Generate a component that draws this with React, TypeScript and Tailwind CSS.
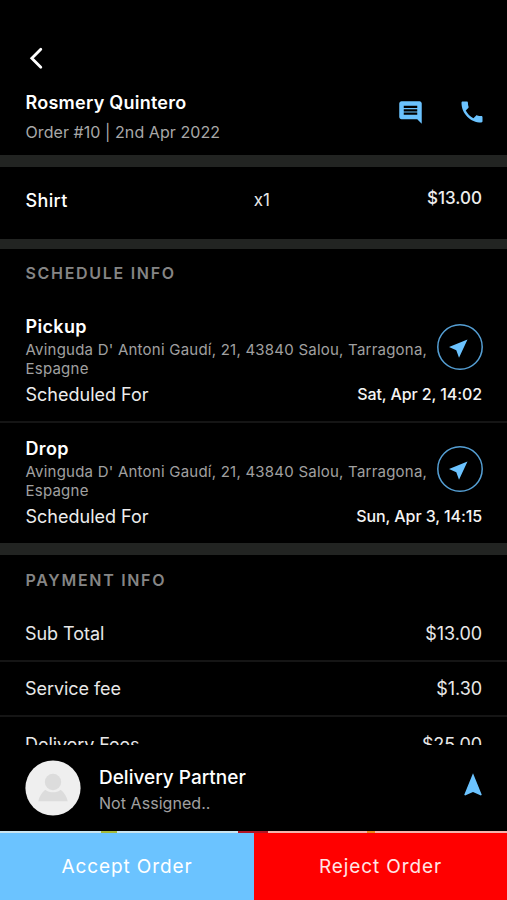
import { MdComment, MdPhone, MdNavigation } from 'react-icons/md'

type Stop = { title: string; address: string; time: string }

const stops: Stop[] = [
  {
    title: 'Pickup',
    address: "Avinguda D' Antoni Gaudí, 21, 43840 Salou, Tarragona, Espagne",
    time: 'Sat, Apr 2, 14:02',
  },
  {
    title: 'Drop',
    address: "Avinguda D' Antoni Gaudí, 21, 43840 Salou, Tarragona, Espagne",
    time: 'Sun, Apr 3, 14:15',
  },
]

const payments = [
  { label: 'Sub Total', amount: '$13.00' },
  { label: 'Service fee', amount: '$1.30' },
  { label: 'Delivery Fees', amount: '$25.00' },
]

function SectionTitle({ children }: { children: string }) {
  return (
    <h2 className="text-[16px] leading-5 font-semibold tracking-[1.7px] text-[#858585]">{children}</h2>
  )
}

function StopRow({ stop }: { stop: Stop }) {
  return (
    <div className="pr-6 pl-[25.5px]">
      <div className="flex h-[66px] items-start justify-between">
        <div>
          <h3 className="text-[18px] leading-6 font-semibold tracking-[0.35px]">{stop.title}</h3>
          <p className="mt-[2px] w-[408px] text-[15px] leading-[18.5px] tracking-[0.23px] text-[#a0a0a0]">
            {stop.address}
          </p>
        </div>
        <div className="mt-[9px] -ml-4 size-[46px] shrink-0">
          <svg className="size-[46px]" viewBox="0 0 46 46" fill="#6bc3ff">
            <circle cx="23" cy="23" r="22.2" fill="none" stroke="#559fd4" strokeWidth="1.5" />
            <path d="M30.5 15.4 12 23.1 19.3 26.3 22 33.8z" />
          </svg>
        </div>
      </div>
      <div className="flex h-[26px] items-center justify-between pr-px">
        <span className="text-[18px] text-[#ededed]">Scheduled For</span>
        <span className="text-[16px] font-medium tracking-[-0.1px] text-[#f4f4f4]">{stop.time}</span>
      </div>
    </div>
  )
}

export default function App() {
  return (
    <div className="flex h-[900px] w-[507px] flex-col overflow-hidden bg-black font-['Inter',sans-serif] text-white">
      <header className="flex h-[155px] shrink-0 flex-col px-[25px] pt-[46px]">
        <button className="flex h-6 w-6 items-center">
          <svg className="h-6 w-6" viewBox="0 0 24 24" fill="none" stroke="white" strokeWidth={2.8} strokeLinecap="round">
            <path d="M15.8 3.2 6.8 12.2 15.8 21.2" />
          </svg>
        </button>
        <div className="mt-5 flex justify-between">
          <div className="pt-px pl-[0.5px]">
            <h1 className="text-[18px] leading-6 font-semibold tracking-[0.25px]">Rosmery Quintero</h1>
            <p className="mt-[5px] text-[16px] leading-6 tracking-[0.07px] text-[#a8a8a8]">Order #10 | 2nd Apr 2022</p>
          </div>
          <div className="mt-[9px] flex items-start gap-[34px] text-[#6bc3ff]">
            <MdComment size={27} />
            <MdPhone size={28} className="-mt-px -mr-[4px]" />
          </div>
        </div>
      </header>

      <div className="h-3 shrink-0 bg-[#222422]" />

      <div className="grid h-[72px] shrink-0 grid-cols-3 items-center pr-[25px] pl-[25.5px]">
        <span className="-mt-1.5 text-[18px] font-medium tracking-[0.35px]">Shirt</span>
        <span className="-mt-1 pl-[76px] text-[17px] text-[#e8e8e8]">x1</span>
        <span className="-mt-2 text-right text-[17px] font-medium text-[#ededed]">$13.00</span>
      </div>

      <div className="h-2.5 shrink-0 bg-[#222422]" />

      <section className="h-[294px] shrink-0 pt-[14px]">
        <div className="px-[25.5px]">
          <SectionTitle>SCHEDULE INFO</SectionTitle>
        </div>
        <div className="mt-8">
          <StopRow stop={stops[0]} />
        </div>
        <div className="mt-3.5 mb-[14px] h-0.5 bg-[#151515]" />
        <StopRow stop={stops[1]} />
      </section>

      <div className="h-3 shrink-0 bg-[#222422]" />

      <section className="h-[190px] shrink-0 overflow-hidden pt-[15px]">
        <div className="px-[25.5px]">
          <SectionTitle>PAYMENT INFO</SectionTitle>
        </div>
        <div className="mt-[17px] divide-y-2 divide-[#151515]">
          {payments.map(p => (
            <div key={p.label} className="flex h-[55px] items-center justify-between px-[25px] text-[18px] tracking-[-0.05px] text-[#e8e8e8]">
              <span>{p.label}</span>
              <span>{p.amount}</span>
            </div>
          ))}
        </div>
      </section>

      <div className="flex h-[87px] shrink-0 items-center px-[25px]">
        <svg className="-mt-px size-14" viewBox="0 0 56 56">
          <circle cx="28" cy="28" r="27.6" fill="#efefef" />
          <circle cx="28" cy="22" r="8.2" fill="#dcdcdc" />
          <path d="M13.3 41.3c1-5 3.500-9 7-11.600 4.500 3.500 11 3.500 15.400 0 3.500 2.600 6 6.600 7 11.600z" fill="#dcdcdc" />
        </svg>
        <div className="ml-[18px] flex-1 pt-[3px]">
          <div className="text-[19px] leading-6 font-medium">Delivery Partner</div>
          <div className="mt-px text-[16px] leading-6 tracking-[0.05px] text-[#a0a0a0]">Not Assigned..</div>
        </div>
        <MdNavigation size={28} className="-mt-2 -mr-[5px] text-[#6bc3ff]" />
      </div>

      {/* sliver of the map behind the action bar */}
      <div className="-mt-px flex h-0.5 shrink-0 bg-[#c9e4ef]">
        <span className="ml-[101px] w-4 bg-[#a6b93a]" />
        <span className="ml-[121px] w-[30px] bg-[#b01525]" />
        <span className="w-[99px] bg-[#f3b3ac]" />
        <span className="w-2 bg-[#e88a1a]" />
        <span className="flex-1 bg-[#f3b3ac]" />
      </div>

      <div className="flex h-[67px] shrink-0 text-[19px] tracking-[0.9px]">
        <button className="w-[254px] bg-[#6bc3ff] pt-0.5">Accept Order</button>
        <button className="flex-1 bg-[#ff0000] pt-0.5 text-[#ffe5e5]">Reject Order</button>
      </div>
    </div>
  )
}
